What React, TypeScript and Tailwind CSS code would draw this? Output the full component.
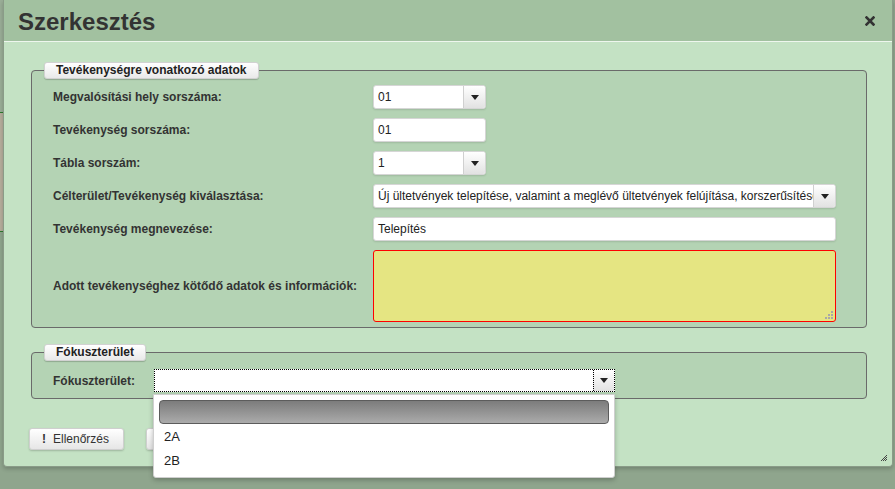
import React from "react";

function Caret() {
  return (
    <svg width="8" height="5" viewBox="0 0 8 5">
      <path d="M0 0h8L4 5z" fill="#222" />
    </svg>
  );
}

function Select({ value, width }: { value: string; width: string }) {
  return (
    <div
      className={`flex h-[24px] ${width} overflow-hidden rounded-[3px] border border-[#d6d6d6] bg-white shadow-[0_1px_2px_rgba(0,0,0,0.12)]`}
    >
      <div className="flex-1 overflow-hidden whitespace-nowrap px-[4px] text-[12px] leading-[22px] text-[#222]">
        {value}
      </div>
      <div className="flex w-[22px] shrink-0 items-center justify-center border-l border-[#d0d0d0] bg-gradient-to-b from-white to-[#e2e2e2]">
        <Caret />
      </div>
    </div>
  );
}

function TextInput({ value, width }: { value: string; width: string }) {
  return (
    <div
      className={`h-[24px] ${width} rounded-[3px] border border-[#d6d6d6] bg-white px-[4px] text-[12px] leading-[22px] text-[#222] shadow-[0_1px_2px_rgba(0,0,0,0.12)]`}
    >
      {value}
    </div>
  );
}

function Legend({ children }: { children: React.ReactNode }) {
  return (
    <legend className="-ml-[9px] h-[17px] rounded-[3px] border border-[#d2d2d2] bg-gradient-to-b from-white to-[#e9e9e9] px-[11px] text-[12px] font-bold leading-[15px] text-[#222] shadow-[0_1px_1px_rgba(0,0,0,0.2)]">
      {children}
    </legend>
  );
}

function Row({ label, children }: { label: string; children: React.ReactNode }) {
  return (
    <div className="flex items-center">
      <div className="w-[320px] text-[12px] font-bold text-[#333]">{label}</div>
      {children}
    </div>
  );
}

export default function App() {
  return (
    <div className="flex h-[489px] w-[895px] overflow-hidden bg-[#8fa58d] font-['Liberation_Sans',Arial,sans-serif]">
      <div className="flex w-[3px] shrink-0 flex-col">
        <div className="h-[112px] bg-[#9aae97]" />
        <div className="h-[120px] border-y border-[#2f7a2f] bg-[#b6ae9c]" />
        <div className="flex-1 bg-[#8fa58d]" />
      </div>

      <div className="relative flex h-[467px] w-[890px] shrink-0 flex-col rounded-b-[4px] border-x border-b border-[#8a9c88] bg-[#c4e2c4] shadow-[0_2px_4px_rgba(0,0,0,0.2)]">
        <div className="flex h-[42px] shrink-0 items-center justify-between border-b border-[#eef6ee] bg-[#a2c1a0] pl-[14px] pr-[17px] pt-[2px]">
          <h1 className="text-[24px] font-bold text-[#333]">Szerkesztés</h1>
          <svg width="10" height="10" viewBox="0 0 10 10" className="mb-[2px]">
            <path d="M1.5 1.5l7 7M8.5 1.5l-7 7" stroke="#333" strokeWidth="2.6" strokeLinecap="square" />
          </svg>
        </div>

        <div className="flex flex-col px-[27px] pt-[20px]">
          <fieldset className="w-[836px] rounded-[4px] border border-[#6a6a6a] bg-[#b4d3b4] pb-[5px] pl-[21px]">
            <Legend>Tevékenységre vonatkozó adatok</Legend>
            <div className="flex flex-col gap-[9px] pt-[6px]">
              <Row label="Megvalósítási hely sorszáma:">
                <Select value="01" width="w-[113px]" />
              </Row>
              <Row label="Tevékenység sorszáma:">
                <TextInput value="01" width="w-[113px]" />
              </Row>
              <Row label="Tábla sorszám:">
                <Select value="1" width="w-[113px]" />
              </Row>
              <Row label="Célterület/Tevékenység kiválasztása:">
                <Select
                  value="Új ültetvények telepítése, valamint a meglévő ültetvények felújítása, korszerűsítése"
                  width="w-[463px]"
                />
              </Row>
              <Row label="Tevékenység megnevezése:">
                <TextInput value="Telepítés" width="w-[463px]" />
              </Row>
              <Row label="Adott tevékenységhez kötődő adatok és információk:">
                <div className="relative h-[72px] w-[463px] rounded-[3px] border border-[#ff0000] bg-[#e5e582]">
                  <svg width="8" height="8" viewBox="0 0 8 8" className="absolute bottom-[2px] right-[2px]">
                    <g fill="#a8a8a8">
                      <rect x="6" y="0" width="2" height="2" />
                      <rect x="3" y="3" width="2" height="2" />
                      <rect x="6" y="3" width="2" height="2" />
                      <rect x="0" y="6" width="2" height="2" />
                      <rect x="3" y="6" width="2" height="2" />
                      <rect x="6" y="6" width="2" height="2" />
                    </g>
                  </svg>
                </div>
              </Row>
            </div>
          </fieldset>

          <fieldset className="mt-[16px] w-[836px] rounded-[4px] border border-[#6a6a6a] bg-[#b4d3b4] pb-[6px] pl-[21px]">
            <Legend>Fókuszterület</Legend>
            <div className="flex items-center pt-[8px]">
              <div className="w-[101px] text-[12px] font-bold text-[#333]">Fókuszterület:</div>
              <div className="relative">
                <div className="flex h-[23px] w-[461px] border border-dotted border-black bg-white">
                  <div className="flex-1" />
                  <div className="flex w-[21px] items-center justify-center border-l border-dotted border-black bg-gradient-to-b from-white to-[#e2e2e2]">
                    <Caret />
                  </div>
                </div>
                <div className="absolute left-[-1px] top-[25px] z-10 w-[462px] rounded-b-[3px] border border-[#cfcfcf] bg-white px-[5px] pb-[5px] pt-[5px] shadow-[0_2px_5px_rgba(0,0,0,0.25)]">
                  <div className="h-[24px] rounded-[4px] border border-[#5c5c5c] bg-gradient-to-b from-[#7c7c7c] to-[#ababab]" />
                  <div className="h-[24px] pl-[5px] pt-[1px] text-[13px] leading-[24px] text-[#222]">2A</div>
                  <div className="h-[24px] pl-[5px] pt-[1px] text-[13px] leading-[24px] text-[#222]">2B</div>
                </div>
              </div>
            </div>
          </fieldset>

          <div className="mt-[29px] flex gap-[22px]">
            <button className="-ml-[2px] flex h-[22px] w-[95px] items-center gap-[7px] rounded-[3px] border border-[#cfcfcf] bg-gradient-to-b from-white to-[#e6e6e6] pl-[12px] text-[12px] text-[#333] shadow-[0_1px_2px_rgba(0,0,0,0.2)]">
              <span className="text-[12px] font-bold leading-none">!</span>
              Ellenőrzés
            </button>
            <button className="flex h-[22px] w-[90px] items-center gap-[7px] rounded-[3px] border border-[#cfcfcf] bg-gradient-to-b from-white to-[#e6e6e6] pl-[12px] text-[12px] text-[#333] shadow-[0_1px_2px_rgba(0,0,0,0.2)]">
              <span className="text-[12px] font-bold leading-none text-[#888]">✓</span>
              Mentés
            </button>
          </div>
        </div>

        <svg width="8" height="8" viewBox="0 0 8 8" className="absolute bottom-[4px] right-[4px]">
          <path d="M7 1L1 7M7 3L3 7M7 5L5 7" stroke="#444" strokeWidth="1" />
        </svg>
      </div>
    </div>
  );
}
